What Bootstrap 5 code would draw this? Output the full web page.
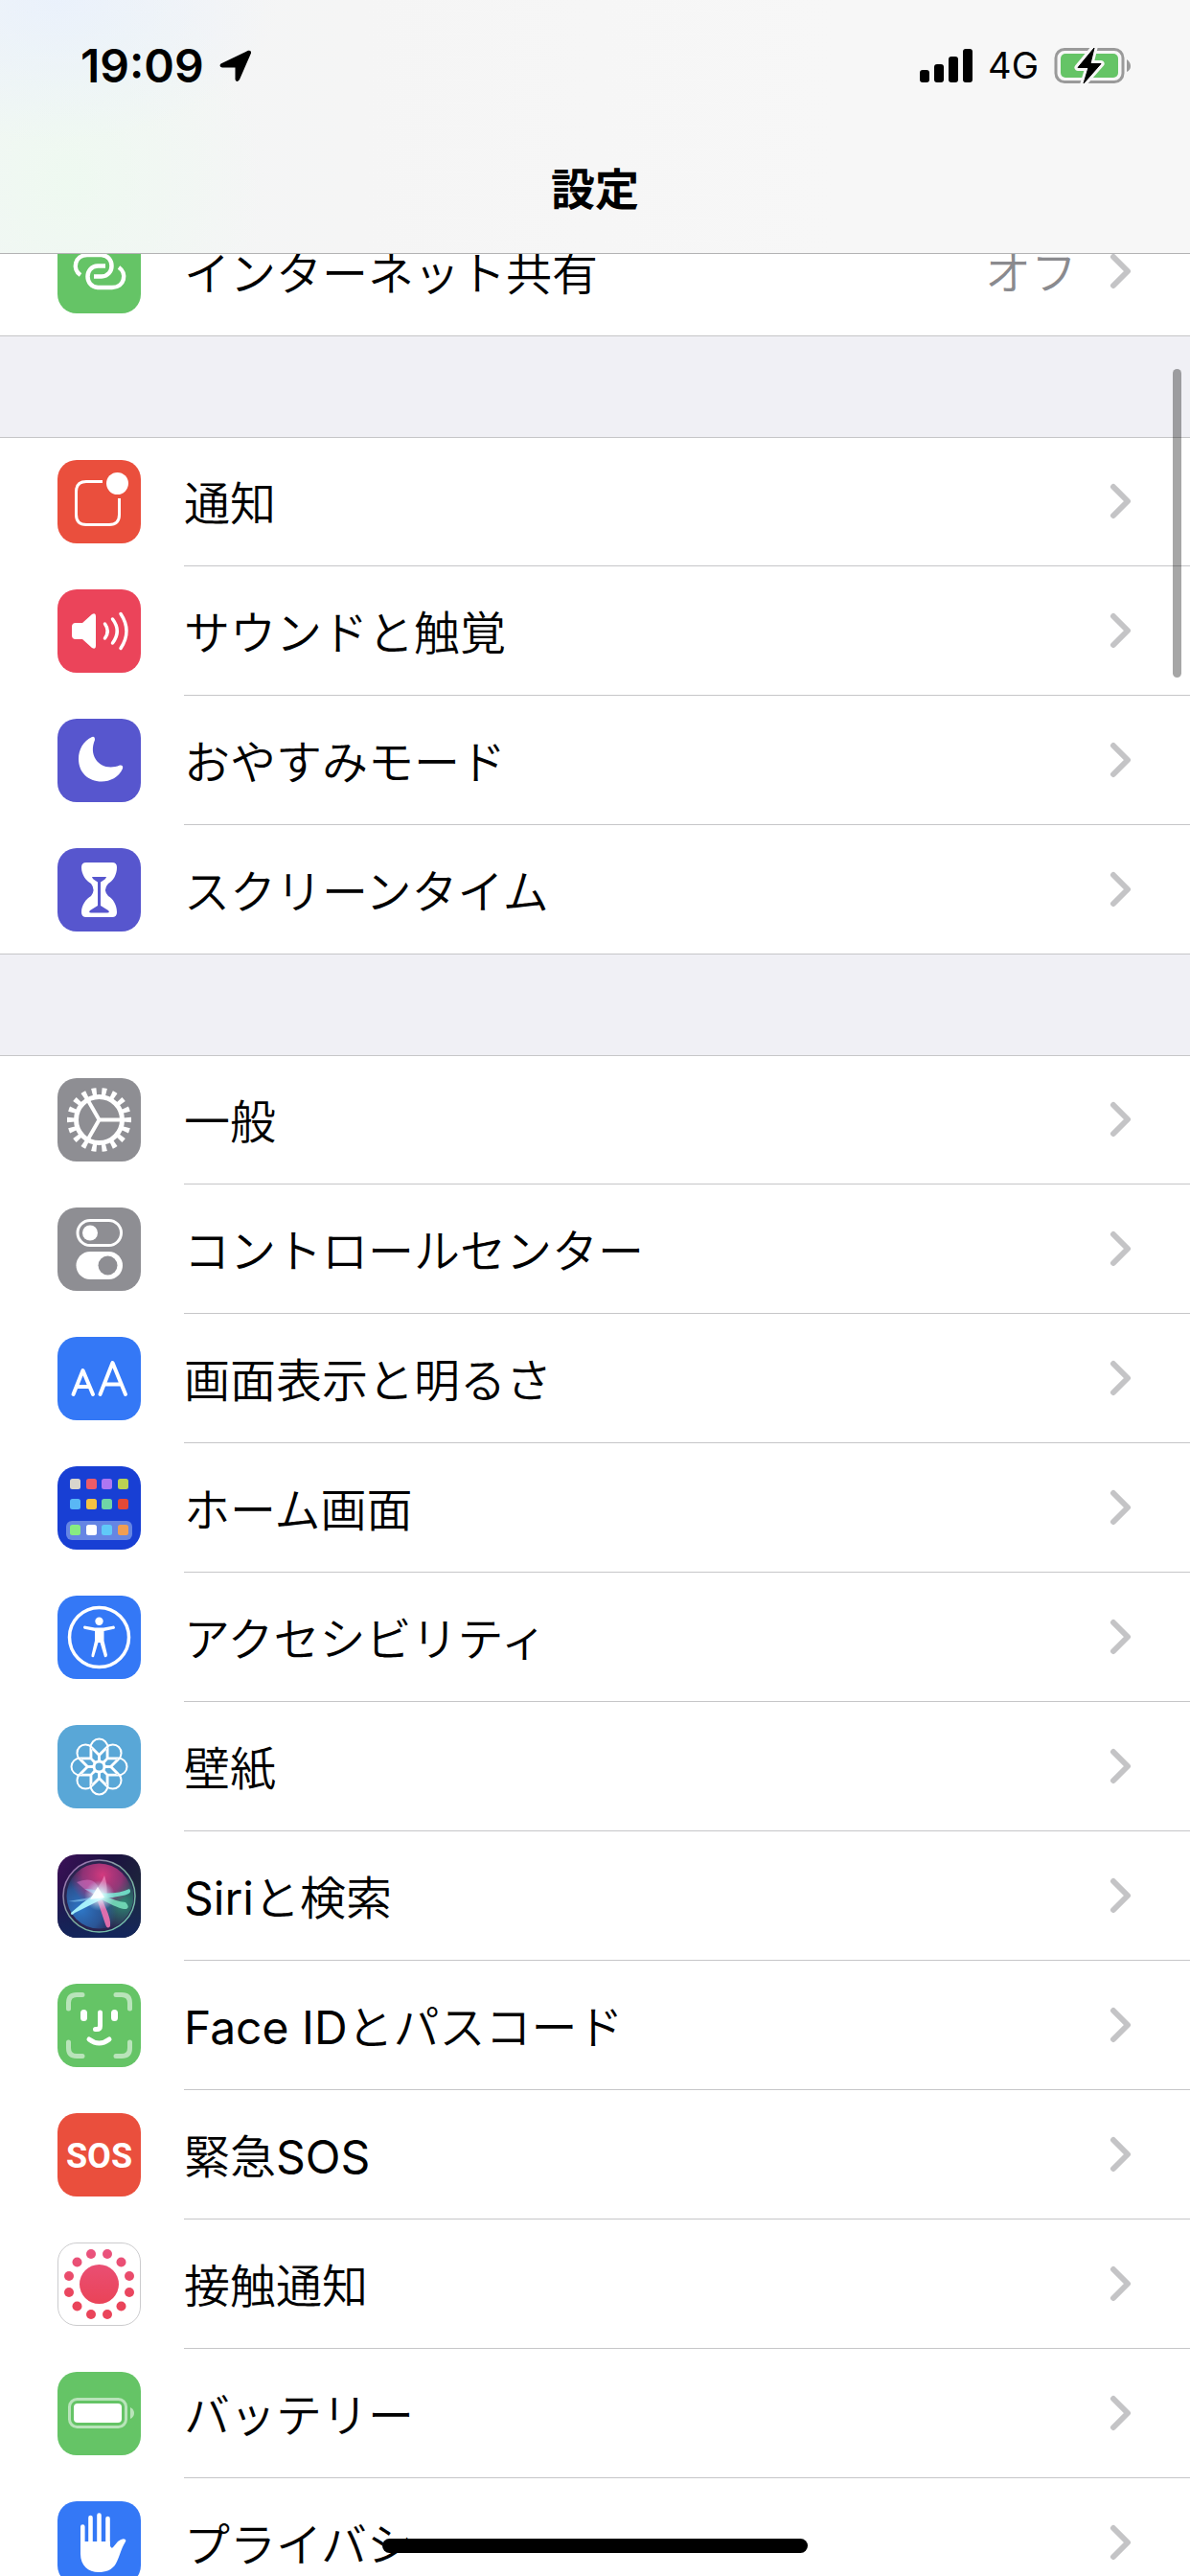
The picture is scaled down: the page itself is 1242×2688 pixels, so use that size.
<!DOCTYPE html>
<html lang="ja">
<head>
<meta charset="utf-8">
<meta name="viewport" content="width=device-width, initial-scale=1">
<title>設定</title>
<link rel="stylesheet" href="https://cdn.jsdelivr.net/npm/bootstrap@5.3.0/dist/css/bootstrap.min.css">
<style>
:root { --line: #c6c6c8; --page: #f0f0f5; }
body { font-family: Inter, "Noto Sans CJK JP", sans-serif; background: var(--page); color: #000; }
.top-bar { height: 265px; border-bottom: 1px solid #b3b3b4; z-index: 10;
  background:
    radial-gradient(ellipse 230px 150px at 60px 0, #e8f0fdcc 0, #e8f0fd00 100%),
    radial-gradient(ellipse 210px 240px at 70px 190px, #edfaefcc 0, #edfaef00 100%),
    linear-gradient(90deg, #f3f5f6 0, #f5f5f5 30%, #f7f7f7 70%); }
.status-row { height: 137px; padding: 0 62px 0 84px; }
.clock { font-size: 48px; font-weight: 600; }
.carrier { font-size: 38px; font-weight: 400; }
.page-title { font-size: 46px; line-height: 72px; font-weight: 700; }
.settings-page { padding-top: 216px; }
.group + .group { margin-top: 105px; }
.group { background: #fff; box-shadow: inset 0 1px var(--line); }
.item { height: 135px; padding-left: 60px; gap: 45px; color: #000; }
.item > svg { width: 87px; height: 87px; }
.item-body { border-bottom: 1px solid var(--line); padding: 4px 60px 0 0; gap: 34px; }
.group > li:last-child .item { border-bottom: 1px solid var(--line); }
.group > li:last-child .item-body { border-bottom: 0; }
.label { font-size: 48px; font-weight: 350; padding-top: 2px; }
.latin { font-weight: 400; }
.value { font-size: 48px; font-weight: 350; color: #8a8a8e; }
.chev { width: 24px; height: 38px; fill: none; stroke: #c4c4c6; stroke-width: 6; stroke-linecap: round; stroke-linejoin: round; margin-bottom: 4px; }
.sos-text { font: 700 36px "Roboto", sans-serif; }
.scroll-thumb { top: 385px; right: 9px; width: 9px; height: 322px; background: rgba(0,0,0,.35); z-index: 5; }
.home-bar { bottom: 24px; width: 444px; height: 15px; background: #000; z-index: 10; }
</style>
<script src="https://cdn.jsdelivr.net/npm/bootstrap@5.3.0/dist/js/bootstrap.bundle.min.js"></script>
</head>
<body class="vh-100 overflow-hidden">

<svg width="0" height="0" class="position-absolute" aria-hidden="true">
  <defs>
    <symbol id="chev" viewBox="0 0 24 38"><path d="M4 4 19 19 4 34"/></symbol>
    <clipPath id="tileClip"><rect width="87" height="87" rx="20"/></clipPath>
  </defs>
</svg>

<header class="top-bar fixed-top">
  <div class="status-row d-flex align-items-center justify-content-between">
    <div class="d-flex align-items-center gap-3">
      <span class="clock">19:09</span>
      <svg width="34" height="34" viewBox="0 0 34 34"><path d="M1.500 14.500 30 .8Q33.500 0 33 3.500L21 31Q18 35 16.500 31V18.500H3Q-1 17.500 1.500 14.500Z"/></svg>
    </div>
    <div class="d-flex align-items-center">
      <svg width="55" height="36" viewBox="0 0 55 36"><rect y="22" width="10" height="13" rx="3"/><rect x="15" y="16" width="10" height="19" rx="3"/><rect x="30" y="8" width="10" height="27" rx="3"/><rect x="45" width="10" height="35" rx="3"/></svg>
      <span class="carrier px-3">4G</span>
      <svg width="80" height="40" viewBox="0 0 80 40"><rect x="2" y="2.500" width="70" height="34" rx="9" fill="none" stroke="#9a9a9a" stroke-width="3"/><path d="M76 13Q80 16 80 20T76 26Z" fill="#9a9a9a"/><rect x="7" y="7" width="60" height="25" rx="5" fill="#65c466"/><path d="M42 1 25 21.500H36L31 38 49 17.500H38Z" stroke="#f7f7f7" stroke-width="7" stroke-linejoin="round"/><path d="M42 1 25 21.500H36L31 38 49 17.500H38Z" stroke="#000" stroke-width="1" stroke-linejoin="round"/></svg>
    </div>
  </div>
  <h1 class="page-title text-center m-0 pt-4">設定</h1>
</header>

<main class="settings-page">
  <ul class="group list-unstyled mb-0">
    <li><a href="#" class="item d-flex align-items-center text-decoration-none">
      <svg class="flex-shrink-0" viewBox="0 0 87 87"><rect width="87" height="87" rx="20" fill="#65c466"/><g fill="none" stroke="#fff" stroke-width="4.500"><path d="M24 47C15 41 18 26 31 26H46C60 27 60 48 46 48.500H38"/><path d="M64 39C73 45 70 60 57 60H42C28 59 28 38 42 37.500H50"/></g></svg>
      <span class="item-body d-flex align-items-center flex-grow-1 align-self-stretch"><span class="label flex-grow-1">インターネット共有</span><span class="value">オフ</span><svg class="chev"><use href="#chev"/></svg></span></a></li>
  </ul>

  <ul class="group list-unstyled mb-0">
    <li><a href="#" class="item d-flex align-items-center text-decoration-none">
      <svg class="flex-shrink-0" viewBox="0 0 87 87"><rect width="87" height="87" rx="20" fill="#ea4f3d"/><path d="M47 22.500H30Q19.500 22.500 19.500 33V57Q19.500 67.500 30 67.500H54Q64.500 67.500 64.500 57V40" fill="none" stroke="#fff" stroke-width="3"/><circle cx="62.500" cy="24.500" r="11.500" fill="#fff"/></svg>
      <span class="item-body d-flex align-items-center flex-grow-1 align-self-stretch"><span class="label flex-grow-1">通知</span><svg class="chev"><use href="#chev"/></svg></span></a></li>
    <li><a href="#" class="item d-flex align-items-center text-decoration-none">
      <svg class="flex-shrink-0" viewBox="0 0 87 87"><rect width="87" height="87" rx="20" fill="#eb445a"/><path d="M19 35H26L36 26Q40 24 40 28V59Q40 63 36 61L26 52H19Q15 52 15 48V39Q15 35 19 35Z" fill="#fff"/><g fill="none" stroke="#fff" stroke-width="3.500" stroke-linecap="round"><path d="M49.500 36Q55 43.500 49.500 51M57.500 31Q67 43.500 57.500 56M66 25.500Q78 43.500 66 61.500"/></g></svg>
      <span class="item-body d-flex align-items-center flex-grow-1 align-self-stretch"><span class="label flex-grow-1">サウンドと触覚</span><svg class="chev"><use href="#chev"/></svg></span></a></li>
    <li><a href="#" class="item d-flex align-items-center text-decoration-none">
      <svg class="flex-shrink-0" viewBox="0 0 87 87"><rect width="87" height="87" rx="20" fill="#5756ce"/><path d="M36 19Q39 18 39 22C31 41 47 56 65 48.500Q69 48 68 52C64 61 55 65.500 46 65.500C32 65.500 22 56 22 42C22 32 27 23 36 19Z" fill="#fff"/></svg>
      <span class="item-body d-flex align-items-center flex-grow-1 align-self-stretch"><span class="label flex-grow-1">おやすみモード</span><svg class="chev"><use href="#chev"/></svg></span></a></li>
    <li><a href="#" class="item d-flex align-items-center text-decoration-none">
      <svg class="flex-shrink-0" viewBox="0 0 87 87"><rect width="87" height="87" rx="20" fill="#5756ce"/><path d="M30 15H57Q62 15 62 20C62 28 58 34 53 37Q47 43.500 53 50C58 53 62 59 62 67Q62 72 57 72H30Q25 72 25 67C25 59 30 53 35 50Q40 43.500 35 37C30 34 25 28 25 20Q25 15 30 15Z" fill="#fff"/><path d="M36 30H51Q51 32 45 35.500V60L53 65Q55 67.500 52 67.500H35Q32 67.500 34 65L42 60V35.500Q36 32 36 30Z" fill="#5756ce"/></svg>
      <span class="item-body d-flex align-items-center flex-grow-1 align-self-stretch"><span class="label flex-grow-1">スクリーンタイム</span><svg class="chev"><use href="#chev"/></svg></span></a></li>
  </ul>

  <ul class="group list-unstyled mb-0">
    <li><a href="#" class="item d-flex align-items-center text-decoration-none">
      <svg class="flex-shrink-0" viewBox="0 0 87 87"><rect width="87" height="87" rx="20" fill="#8e8e93"/><g fill="none" stroke="#fff"><circle cx="43.500" cy="43.500" r="24" stroke-width="5"/><circle cx="43.500" cy="43.500" r="29.500" stroke-width="8" pathLength="180" stroke-dasharray="4.600 5.400" stroke-dashoffset="2.300"/><path d="M43.500 43.500H66M43.500 43.500 32 23.500M43.500 43.500 32 63.500" stroke-width="4"/></g></svg>
      <span class="item-body d-flex align-items-center flex-grow-1 align-self-stretch"><span class="label flex-grow-1">一般</span><svg class="chev"><use href="#chev"/></svg></span></a></li>
    <li><a href="#" class="item d-flex align-items-center text-decoration-none">
      <svg class="flex-shrink-0" viewBox="0 0 87 87"><rect width="87" height="87" rx="20" fill="#8e8e93"/><rect x="21" y="13.500" width="45.500" height="26" rx="13" fill="none" stroke="#fff" stroke-width="3"/><circle cx="34" cy="26.500" r="8" fill="#fff"/><rect x="19.500" y="46" width="48.500" height="29" rx="14.500" fill="#fff"/><circle cx="52.500" cy="60.500" r="10" fill="#8e8e93"/></svg>
      <span class="item-body d-flex align-items-center flex-grow-1 align-self-stretch"><span class="label flex-grow-1">コントロールセンター</span><svg class="chev"><use href="#chev"/></svg></span></a></li>
    <li><a href="#" class="item d-flex align-items-center text-decoration-none">
      <svg class="flex-shrink-0" viewBox="0 0 87 87"><rect width="87" height="87" rx="20" fill="#3478f6"/><g fill="none" stroke="#fff" stroke-width="4" stroke-linecap="round" stroke-linejoin="round"><path d="M16.500 60 26.500 35 37 60M20 52H33M44.500 60 57.500 27 71 60M49 49.500H66"/></g></svg>
      <span class="item-body d-flex align-items-center flex-grow-1 align-self-stretch"><span class="label flex-grow-1">画面表示と明るさ</span><svg class="chev"><use href="#chev"/></svg></span></a></li>
    <li><a href="#" class="item d-flex align-items-center text-decoration-none">
      <svg class="flex-shrink-0" viewBox="0 0 87 87"><rect width="87" height="87" rx="20" fill="#183fd4"/><rect x="9" y="57" width="69" height="20" rx="6" fill="#6585e4"/><g><rect x="13" y="13" width="11" height="11" rx="2.500" fill="#d8d6cd"/><rect x="30" y="13" width="11" height="11" rx="2.500" fill="#eb5c68"/><rect x="46" y="13" width="11" height="11" rx="2.500" fill="#ae76f2"/><rect x="63" y="13" width="11" height="11" rx="2.500" fill="#bad253"/><rect x="13" y="34" width="11" height="11" rx="2.500" fill="#59b7f5"/><rect x="30" y="34" width="11" height="11" rx="2.500" fill="#f5c243"/><rect x="46" y="34" width="11" height="11" rx="2.500" fill="#6fd5a7"/><rect x="63" y="34" width="11" height="11" rx="2.500" fill="#e44936"/><rect x="13" y="61" width="11" height="11" rx="2.500" fill="#87ec82"/><rect x="30" y="61" width="11" height="11" rx="2.500" fill="#fff"/><rect x="46" y="61" width="11" height="11" rx="2.500" fill="#60c9f8"/><rect x="63" y="61" width="11" height="11" rx="2.500" fill="#f09e54"/></g></svg>
      <span class="item-body d-flex align-items-center flex-grow-1 align-self-stretch"><span class="label flex-grow-1">ホーム画面</span><svg class="chev"><use href="#chev"/></svg></span></a></li>
    <li><a href="#" class="item d-flex align-items-center text-decoration-none">
      <svg class="flex-shrink-0" viewBox="0 0 87 87"><rect width="87" height="87" rx="20" fill="#3478f6"/><circle cx="43.500" cy="43.500" r="31" fill="none" stroke="#fff" stroke-width="3.500"/><circle cx="43.500" cy="26.800" r="4.200" fill="#fff"/><path d="M28 31.500 39 33.500H48L59 31.500Q61 34 59 34.800L48.500 37V47L52 62Q51.500 65 49 64L44.500 49H42.500L38 64Q35 65 35.500 62L39 47V37L28 34.800Q26 33 28 31.500Z" fill="#fff"/></svg>
      <span class="item-body d-flex align-items-center flex-grow-1 align-self-stretch"><span class="label flex-grow-1">アクセシビリティ</span><svg class="chev"><use href="#chev"/></svg></span></a></li>
    <li><a href="#" class="item d-flex align-items-center text-decoration-none">
      <svg class="flex-shrink-0" viewBox="0 0 87 87"><rect width="87" height="87" rx="20" fill="#59a7d7"/><defs><path id="petal" d="M43.500 38V32L36.500 25M43.500 32 50.500 25M34.500 34.500V24A9 9.500 0 0 1 52.500 24V34.500L43.500 42Z"/></defs><g fill="none" stroke="#fff" stroke-width="2"><use href="#petal"/><use href="#petal" transform="rotate(45 43.500 43.500)"/><use href="#petal" transform="rotate(90 43.500 43.500)"/><use href="#petal" transform="rotate(135 43.500 43.500)"/><use href="#petal" transform="rotate(180 43.500 43.500)"/><use href="#petal" transform="rotate(225 43.500 43.500)"/><use href="#petal" transform="rotate(270 43.500 43.500)"/><use href="#petal" transform="rotate(315 43.500 43.500)"/><circle cx="43.500" cy="43.500" r="5.500" stroke-width="3" fill="#59a7d7"/></g></svg>
      <span class="item-body d-flex align-items-center flex-grow-1 align-self-stretch"><span class="label flex-grow-1">壁紙</span><svg class="chev"><use href="#chev"/></svg></span></a></li>
    <li><a href="#" class="item d-flex align-items-center text-decoration-none">
      <svg class="flex-shrink-0" viewBox="0 0 87 87">
        <defs>
          <linearGradient id="siriBack" x1="0" y1="0" x2="1" y2=".6"><stop stop-color="#3c1159"/><stop offset=".5" stop-color="#1c1240"/><stop offset="1" stop-color="#1d2a3a"/></linearGradient>
          <linearGradient id="siriBlue" x1="0" y1="1" x2="0" y2="0"><stop stop-color="#14265c"/><stop offset="1" stop-color="#14265c" stop-opacity="0"/></linearGradient>
          <linearGradient id="siriRing" x1="0" y1="0" x2="1" y2="1"><stop stop-color="#a35fb5"/><stop offset=".5" stop-color="#7fae9e"/><stop offset="1" stop-color="#6fc7b0"/></linearGradient>
          <radialGradient id="siriPink" cx=".55" cy=".18" r=".5"><stop stop-color="#d33a7e"/><stop offset=".6" stop-color="#a8357e" stop-opacity=".8"/><stop offset="1" stop-color="#a8357e" stop-opacity="0"/></radialGradient>
          <radialGradient id="siriSea" cx=".22" cy=".7" r=".55"><stop stop-color="#2e78c8"/><stop offset=".6" stop-color="#2b62a8" stop-opacity=".8"/><stop offset="1" stop-color="#2b62a8" stop-opacity="0"/></radialGradient>
          <radialGradient id="siriGreen" cx=".85" cy=".6" r=".4"><stop stop-color="#2f8a74"/><stop offset="1" stop-color="#2f8a74" stop-opacity="0"/></radialGradient>
          <radialGradient id="siriGlow"><stop stop-color="#fff"/><stop offset=".3" stop-color="#d9fbff" stop-opacity=".8"/><stop offset="1" stop-color="#b0e8ff" stop-opacity="0"/></radialGradient>
        </defs>
        <g clip-path="url(#tileClip)"><rect width="87" height="87" fill="url(#siriBack)"/><rect y="30" width="87" height="57" fill="url(#siriBlue)"/></g>
        <circle cx="43.500" cy="43.500" r="37" fill="#2a2450"/><circle cx="43.500" cy="43.500" r="36" fill="url(#siriGreen)"/><circle cx="43.500" cy="43.500" r="34" fill="url(#siriSea)"/><circle cx="43.500" cy="43.500" r="34" fill="url(#siriPink)"/>
        <circle cx="43.500" cy="43.500" r="37.500" fill="none" stroke="url(#siriRing)" stroke-width="1.500"/>
        <path d="M20 29Q42 20 45 43Q36 44 20 29Z" fill="#d577c6" opacity=".55"/>
        <path d="M49 22Q53 34 51 46L36 41Q44 34 49 22Z" fill="#f08cc0" opacity=".7"/>
        <path d="M43 40Q62 42 75 36Q79 41 68 43Q56 46 44 46Z" fill="#75efd4" opacity=".85"/>
        <path d="M46 42Q61 49 71 50Q76 55 72 57Q66 58 46 47Z" fill="#78e3bd" opacity=".85"/>
        <path d="M45 43 50 55Q56 68 55 75Q52 79 50 73L41 46Z" fill="#f071b1" opacity=".9"/>
        <path d="M46 40 38 42Q25 51 14 61Q14 65 18 61L48 46Z" fill="#a6f0fa"/>
        <path d="M11 49Q30 51 42 43L28 36Q44 36 46 43Z" fill="#8acdf5" opacity=".6"/>
        <circle cx="44" cy="43" r="16" fill="url(#siriGlow)"/><path d="M42 34 49 45 34 47Z" fill="#fff" opacity=".9"/>
      </svg>
      <span class="item-body d-flex align-items-center flex-grow-1 align-self-stretch"><span class="label flex-grow-1"><span class="latin">Siri</span>と検索</span><svg class="chev"><use href="#chev"/></svg></span></a></li>
    <li><a href="#" class="item d-flex align-items-center text-decoration-none">
      <svg class="flex-shrink-0" viewBox="0 0 87 87"><rect width="87" height="87" rx="20" fill="#65c466"/><g fill="none" stroke="#fff" stroke-linecap="round"><path d="M11.500 26V20Q11.500 11.500 20 11.500H26M61 11.500H67Q75.500 11.500 75.500 20V26M75.500 61V67Q75.500 75.500 67 75.500H61M26 75.500H20Q11.500 75.500 11.500 67V61" stroke-width="5" opacity=".55"/><path d="M27.500 30.500V35.500M59.500 30.500V35.500" stroke-width="7"/><path d="M44.500 30V44Q44.500 47.500 41 47.500H39.500" stroke-width="5"/><path d="M33 58Q43.500 66 54 58" stroke-width="5"/></g></svg>
      <span class="item-body d-flex align-items-center flex-grow-1 align-self-stretch"><span class="label flex-grow-1"><span class="latin">Face ID</span>とパスコード</span><svg class="chev"><use href="#chev"/></svg></span></a></li>
    <li><a href="#" class="item d-flex align-items-center text-decoration-none">
      <svg class="flex-shrink-0" viewBox="0 0 87 87"><rect width="87" height="87" rx="20" fill="#ea4f3d"/><text x="43.500" y="57" text-anchor="middle" fill="#fff" class="sos-text">SOS</text></svg>
      <span class="item-body d-flex align-items-center flex-grow-1 align-self-stretch"><span class="label flex-grow-1">緊急<span class="latin">SOS</span></span><svg class="chev"><use href="#chev"/></svg></span></a></li>
    <li><a href="#" class="item d-flex align-items-center text-decoration-none">
      <svg class="flex-shrink-0" viewBox="0 0 87 87"><defs><linearGradient id="expo" gradientUnits="userSpaceOnUse" x1="0" y1="5" x2="0" y2="60"><stop stop-color="#ea5480"/><stop offset="1" stop-color="#ea445a"/></linearGradient></defs><rect x=".5" y=".5" width="86" height="86" rx="19.500" fill="#fff" stroke="#ccccce"/><circle cx="43.500" cy="43.500" r="20.500" fill="url(#expo)"/><g fill="url(#expo)"><circle cx="35" cy="12" r="5"/><circle cx="52" cy="12" r="5"/><circle cx="66.500" cy="20.500" r="5"/><circle cx="75" cy="35" r="5"/><circle cx="75" cy="52" r="5"/><circle cx="66.500" cy="66.500" r="5"/><circle cx="52" cy="75" r="5"/><circle cx="35" cy="75" r="5"/><circle cx="20.500" cy="66.500" r="5"/><circle cx="12" cy="52" r="5"/><circle cx="12" cy="35" r="5"/><circle cx="20.500" cy="20.500" r="5"/></g></svg>
      <span class="item-body d-flex align-items-center flex-grow-1 align-self-stretch"><span class="label flex-grow-1">接触通知</span><svg class="chev"><use href="#chev"/></svg></span></a></li>
    <li><a href="#" class="item d-flex align-items-center text-decoration-none">
      <svg class="flex-shrink-0" viewBox="0 0 87 87"><rect width="87" height="87" rx="20" fill="#65c466"/><rect x="12.500" y="28.500" width="59" height="29" rx="8" fill="none" stroke="#fff" stroke-width="3" opacity=".55"/><path d="M76 37Q80 39 80 43T76 49Z" fill="#fff" opacity=".55"/><rect x="17" y="33" width="50" height="20" rx="4" fill="#fff"/></svg>
      <span class="item-body d-flex align-items-center flex-grow-1 align-self-stretch"><span class="label flex-grow-1">バッテリー</span><svg class="chev"><use href="#chev"/></svg></span></a></li>
    <li><a href="#" class="item d-flex align-items-center text-decoration-none">
      <svg class="flex-shrink-0" viewBox="0 0 87 87"><rect width="87" height="87" rx="20" fill="#3478f6"/><g fill="none" stroke="#fff" stroke-width="4.600" stroke-linecap="round"><path d="M26.300 26.500V50M34.500 17V45M43.500 14.500V45M52.500 18V45"/></g><path d="M24 42H54.800V46Q56 50 58 48L63 42Q68 38 71 40Q72 41 70.500 43C66 50 65 58 61 65C57 72 50 74 43 74C32 74 24 67 24 55Z" fill="#fff"/></svg>
      <span class="item-body d-flex align-items-center flex-grow-1 align-self-stretch"><span class="label flex-grow-1">プライバシー</span><svg class="chev"><use href="#chev"/></svg></span></a></li>
  </ul>
</main>

<div class="scroll-thumb position-fixed rounded-pill"></div>
<div class="home-bar position-fixed start-50 translate-middle-x rounded-pill"></div>
</body>
</html>
